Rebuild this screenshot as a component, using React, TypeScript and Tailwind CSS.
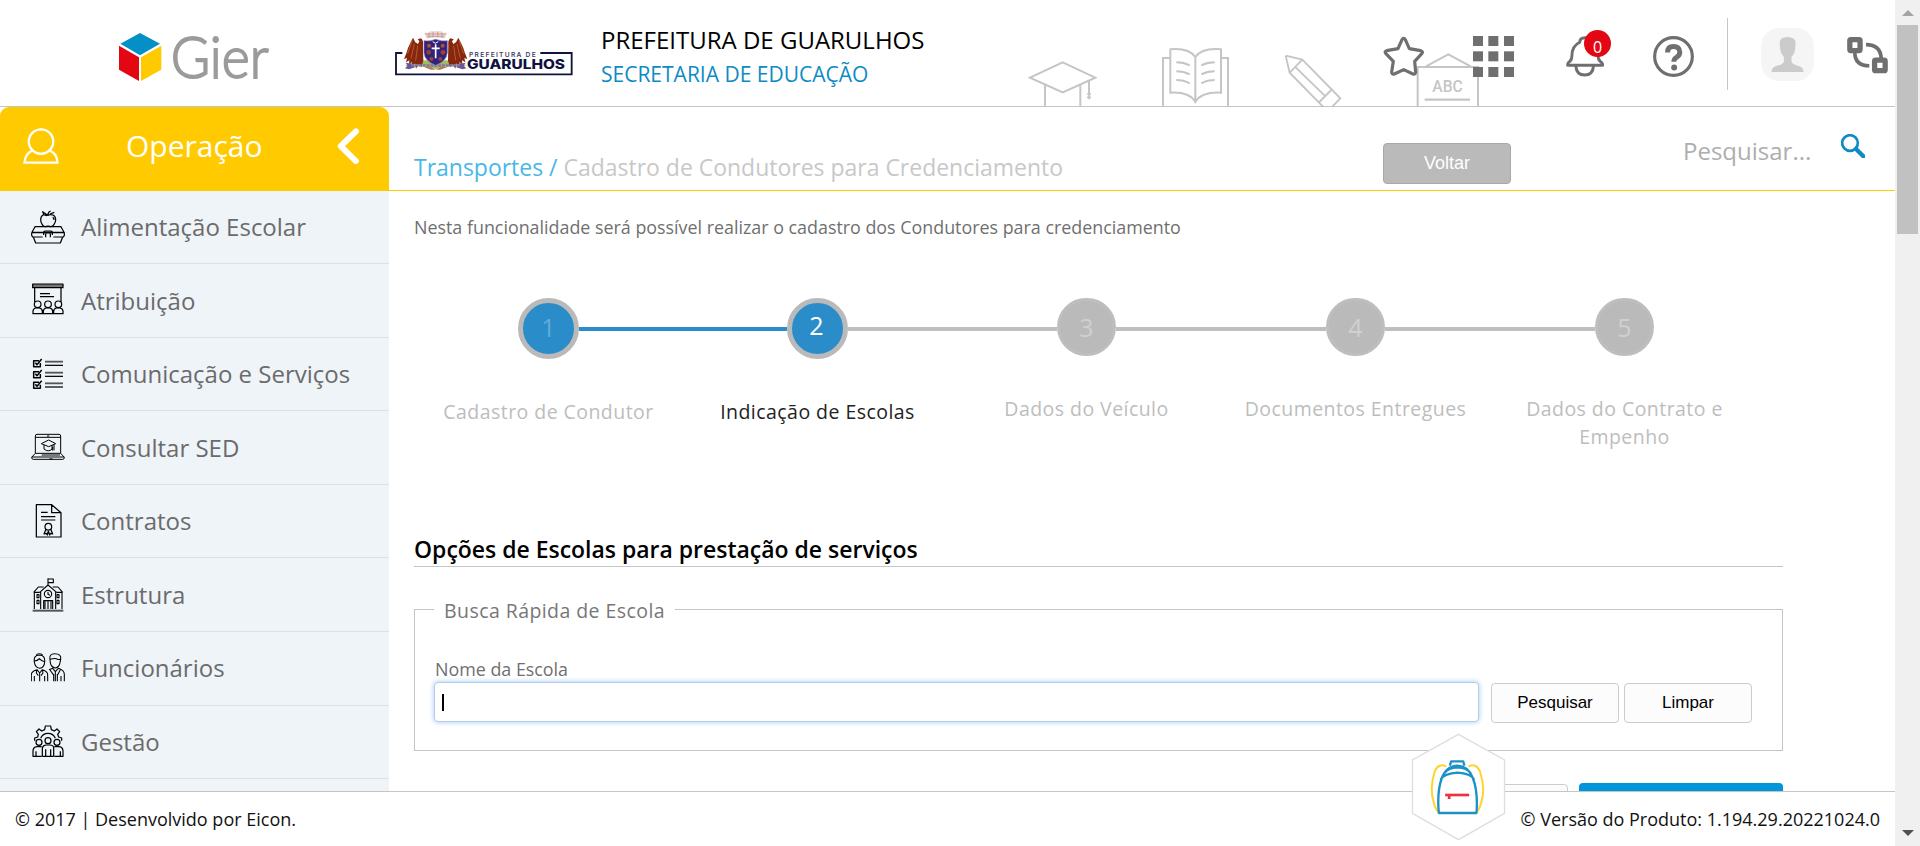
import type { ReactNode } from "react";

type IconProps = { box: string; children: ReactNode };

function MenuIcon({ box, children }: IconProps) {
  return (
    <svg viewBox={box} className="ml-[31px] size-[34px] shrink-0" fill="none" stroke="#000" strokeWidth="3.7" strokeLinejoin="round">
      {children}
    </svg>
  );
}

const menu: { label: string; icon: ReactNode }[] = [
  {
    label: "Alimentação Escolar",
    icon: (
      <MenuIcon box="93 630 102 102">
        <path d="M143 646c-8-5-21-2-21 13 0 10 7 21 13 21 3 0 5-2 9-2s6 2 9 2c6 0 14-11 14-21 0-15-14-18-24-13Zm0 0c1-6 5-12 9-13M142 645l-14-10 3 9 10 3M150 642l13-5M158 652c3 1 4 5 4 8" />
        <path d="M105 680h78l9 17H96ZM95 698h98v8l-3 5h-30M95 698v8l3 5h30M100 711l7 18h74l7-18M131 705v-8q0-4 4-4h18q4 0 4 4v8M137 712v-9q0-4 4-4h6q4 0 4 4v9M112 711h16M160 711h16" />
      </MenuIcon>
    ),
  },
  {
    label: "Atribuição",
    icon: (
      <MenuIcon box="93 71 102 102">
        <path d="M98 74h91v11H98Z" fill="#777" />
        <path d="M104 86v42M183 86v42M120 103h30M120 112h42" />
        <circle cx="113" cy="135" r="10" /><circle cx="144" cy="135" r="10" /><circle cx="175" cy="135" r="10" />
        <path d="M99 163v-7q0-8 8-10h11q9 2 9 10v7ZM130 163v-7q0-8 8-10h11q9 2 9 10v7ZM161 163v-7q0-8 8-10h11q9 2 9 10v7Z" />
      </MenuIcon>
    ),
  },
  {
    label: "Comunicação e Serviços",
    icon: (
      <MenuIcon box="93 292 102 102">
        {[0, 33, 65].map((y) => (
          <g key={y} transform={`translate(0 ${y})`}>
            <path d="M121 310v11h-20v-18h16" strokeWidth="4.5" />
            <path d="M106 309l5 6 14-17" strokeWidth="4.5" />
            <path d="M135 306h54" stroke="#555" strokeWidth="5.5" />
            <path d="M135 317h54" />
          </g>
        ))}
      </MenuIcon>
    ),
  },
  {
    label: "Consultar SED",
    icon: (
      <MenuIcon box="93 513 102 102">
        <path d="M106 580v-52q0-5 5-5h66q5 0 5 5v52M106 532h76M106 580h76l11 12q0 6-5 6h-88q-5 0-5-6ZM95 591h98M125 585h55M141 528h7M148 597h10" strokeWidth="3" />
        <path d="M124 551l22-11 21 11-21 9ZM132 555v12q13 11 24 0v-12M162 553v18M158 560v12" strokeWidth="3" />
      </MenuIcon>
    ),
  },
  {
    label: "Contratos",
    icon: (
      <MenuIcon box="93 734 102 102">
        <path d="M109 736h46l28 24v73h-74ZM155 736v24h28M123 759h20M123 772h43M123 782h43" />
        <circle cx="145" cy="802" r="10" />
        <path d="M138 810l-6 14 7-2 3 5 3-12 4 12 3-5 6 2-6-15" />
      </MenuIcon>
    ),
  },
  {
    label: "Estrutura",
    icon: (
      <MenuIcon box="93 113 102 102">
        <path d="M98 211h92" stroke="#555" strokeWidth="6" />
        <path d="M103 206v-50M186 206v-50M122 206v-53M167 206v-53M101 156l14-16h16M188 156l-14-16h-16M101 156h18M170 156h18M119 156l25-22 26 22M144 134v-20M145 116h15v11h-15M131 206v-25h27v25M144 206v-25M135 206v-24M153 206v-24" strokeWidth="3.3" />
        <circle cx="144" cy="161" r="11" strokeWidth="3.3" />
        <path d="M144 155v7l6 3M111 163h6v9h-6ZM171 163h6v9h-6ZM111 180h6v10h-6ZM171 180h6v10h-6Z" strokeWidth="3.3" />
      </MenuIcon>
    ),
  },
  {
    label: "Funcionários",
    icon: (
      <MenuIcon box="93 335 102 102">
        <path d="M110 348q-1-5 8-5t9 5M103 368q-3-21 15-20 18-1 16 20-1 17-15 19-14-2-16-19ZM103 365q10 0 15-7 8 9 16 9M94 426v-20q0-10 17-15l8 10 8-10q16 5 16 15v20M119 401v25M103 426v-16M134 426v-16M111 391l-2 10 6 8M127 391l2 10-6 8" strokeWidth="3.2" />
        <path d="M150 362q-4-19 14-19 21 0 18 17l-2 10q-2 14-14 16-13-2-15-16ZM150 360q14-4 19-2 8 4 12 2M147 391l11-4 8 10 9-10q18 6 18 18v21M166 397v29M161 426v-22M172 426v-22M183 426v-16M150 392l10 14M181 391l-8 15" strokeWidth="3.2" />
      </MenuIcon>
    ),
  },
  {
    label: "Gestão",
    icon: (
      <MenuIcon box="93 556 102 102">
        <path d="M104 603v-8l9-3 2-8-6-8 8-8 8 6 9-4 2-11h16l2 11 9 4 8-6 8 8-6 8 3 8 9 3v8M122 596q6-15 22-15t22 15" />
        <circle cx="117" cy="608" r="9" /><circle cx="144" cy="603" r="9" /><circle cx="171" cy="608" r="9" />
        <path d="M125 650h-26V635q0-13 12-14h14M163 650h26V635q0-13-12-14h-14M127 650v-25q2-9 12-9h10q12 0 12 9v25M137 650v-21M152 650v-21M108 650v-15M181 650v-15M127 650h34" />
      </MenuIcon>
    ),
  },
];

function Crest() {
  return (
    <svg viewBox="0 0 600 180" className="ml-[-10px] h-[60px] w-[200px] shrink-0">
      <path d="M52 84H33v64h527V84H466" fill="none" stroke="#10123f" strokeWidth="5.5" />
      <path d="M60 122q40-22 92-14 54-8 92 14l-18 4-28-2-46 8-46-8-28 2Z" fill="#a3bb60" />
      <path d="M114 62q2-16-6-22l-10 3 5 6-4 8-8-5-7-14-8 16-7 15-5 16-7 17 9-3-3 13 10-6-1 12 9-7v14l9-10 3 16 8-14 8 10 6-20Z" fill="#85280f" />
      <path d="M190 62q-2-16 6-22l10 3-5 6 4 8 8-5 7-14 8 16 7 15 5 16 7 17-9-3 3 13-10-6 1 12-9-7v14l-9-10-3 16-8-14-8 10-6-20Z" fill="#85280f" />
      <path d="M82 46l-14 40M88 56l-10 44M98 62l-6 44M222 46l14 40M216 56l10 44M206 62l6 44" stroke="#c2632f" strokeWidth="2.5" fill="none" />
      <path d="M62 113l22 4 6 10-18 6-12-3 8-8ZM242 113l-22 4-6 10 18 6 12-3-8-8Z" fill="#6a549c" />
      <path d="M78 120q76 3 148 0" fill="none" stroke="#8574ac" strokeWidth="7" strokeDasharray="9 2.5" />
      <path d="M118 127l14-3 20 10 20-10 14 3-20 7H138Z" fill="#b87a50" />
      <path d="M118 23h13l3-4h36l3 4h13l-7 18q-27-7-54 0Z" fill="#f0d6d0" />
      <path d="M120 27h64M126 34h52M132 23v16M144 20v17M158 20v17M171 23v16" stroke="#b0827d" strokeWidth="1.8" />
      <path d="M117 47q18 3 35-4 17 7 35 4v36q-2 25-35 38-33-13-35-38Z" fill="#33227a" stroke="#8b7cba" strokeWidth="2" />
      <circle cx="132" cy="62" r="6" fill="#a95731" /><circle cx="173" cy="62" r="6" fill="#a95731" />
      <circle cx="131" cy="82" r="7" fill="#8d4637" /><circle cx="174" cy="82" r="7" fill="#a9412a" />
      <circle cx="139" cy="102" r="6" fill="#8d4637" /><circle cx="166" cy="102" r="6" fill="#8d4637" />
      <path d="M152 58v42M140 70h24" stroke="#fff" strokeWidth="5" />
      <path d="M143 50q8 9 17 0" fill="none" stroke="#fff" strokeWidth="3" />
      <text x="252" y="95" fontFamily="Inter, sans-serif" fontSize="20" fontWeight="600" fill="#3d3f66" textLength="200" lengthAdjust="spacing">PREFEITURA DE</text>
      <text x="246" y="133" fontFamily="Inter, sans-serif" fontSize="40" fontWeight="800" fill="#10123f" textLength="294" lengthAdjust="spacingAndGlyphs">GUARULHOS</text>
    </svg>
  );
}

function Header() {
  return (
    <header className="relative flex h-[107px] shrink-0 items-start border-b border-[#c5c5c5] bg-white">
      <svg viewBox="0 0 1560 318" className="absolute top-0 left-[980px] h-[106px] w-[520px]" fill="none" stroke="#c5c5c5" strokeWidth="6">
        <path d="M150 233l98-46 98 46-98 44ZM195 256v64M301 256v64M327 242v40" />
        <path d="M327 278v20M321 282h12M321 292h12" strokeWidth="5" />
        <path d="M549 320V174h22M744 320V174h-21M571 278V148q55-5 75 23 20-28 77-23v130q-58-3-77 28-18-31-75-28ZM646 171v135M589 187q22 0 40 9M589 214q22 0 40 9M589 240q22 0 40 10M704 187q-22 0-40 9M704 214q-22 0-40 9M704 240q-22 0-40 10" />
        <path d="M917 167l50 12 114 116-24 25M917 167l12 51 104 106M967 179l-38 39M947 202l90 88M1054 270l-36 36" strokeWidth="5.5" />
        <path d="M1313 320V201h181v119M1338 199l67-36 67 36" />
        <path d="M1334 299h136" strokeWidth="7" />
        <text x="1357" y="277" fontFamily="Roboto, sans-serif" fontSize="52" fontWeight="500" fill="#c5c5c5" stroke="none" textLength="91" lengthAdjust="spacingAndGlyphs">ABC</text>
      </svg>

      <svg viewBox="354 45 456 240" className="mt-[15px] ml-[118px] h-[80px] w-[152px] shrink-0 overflow-visible">
        <path d="M420 99l60 32-60 35-59-35Z" fill="#048fc6" />
        <path d="M357 137l60 35v71l-60-34Z" fill="#e30613" />
        <path d="M484 137l-61 35v71l61-34Z" fill="#ffcb00" />
        <text x="512" y="234" fontFamily="Lato, sans-serif" fontSize="174" fontWeight="300" fill="#9b9b9b" stroke="#9b9b9b" strokeWidth="5.5" textLength="294" lengthAdjust="spacingAndGlyphs">Gier</text>
      </svg>

      <div className="mt-[25px] ml-[125px] flex w-[200px] shrink-0">
        <Crest />
      </div>

      <div className="mt-[23px] ml-[6px] w-[600px] leading-[34px]">
        <p className="text-[24px] text-black">PREFEITURA DE GUARULHOS</p>
        <p className="text-[21px] text-[#0d8bc5]">SECRETARIA DE EDUCAÇÃO</p>
      </div>

      <div className="relative ml-[182px] flex items-start">
        <svg viewBox="1208 108 126 120" className="mt-9 h-10 w-[42px] shrink-0" fill="none" stroke="#6f6f6f" strokeWidth="9.5" strokeLinejoin="round">
          <path d="M1270 115q3 0 5 4l12 27 34 6q8 3 4 8l-22 24 3 32q0 8-8 6l-28-13-28 13q-8 2-8-6l5-32-23-24q-4-6 3-8l34-6 12-27q2-4 5-4Z" />
        </svg>
        <svg viewBox="0 0 123 123" className="mt-9 ml-[48px] size-[41px] shrink-0" fill="#6f6f6f">
          {[0, 46, 93].map((y) => [0, 46, 93].map((x) => <rect key={`${x}-${y}`} x={x} y={y} width="30" height="30" />))}
        </svg>
        <div className="relative mt-9 ml-[52px] h-[41px] w-[38px] shrink-0">
          <svg viewBox="257 108 116 123" className="h-[41px] w-[38px]" fill="none" stroke="#6f6f6f" strokeWidth="9" strokeLinejoin="round">
            <path d="M262 196q0-8 7-12 6-5 6-16 0-31 24-42 0-14 16-14t16 14q24 12 24 42 0 11 6 16 8 5 8 12ZM287 198q2 28 27 28t27-28" />
          </svg>
          <span className="absolute -top-[6px] left-[18px] flex size-[27px] items-center justify-center rounded-full bg-[#e30613] pt-[7px] text-[16px] leading-none text-white">0</span>
        </div>
        <svg viewBox="518 107 124 124" className="mt-9 ml-[49px] size-[41px] shrink-0" fill="none" stroke="#6f6f6f">
          <circle cx="580" cy="169" r="57" strokeWidth="9.5" />
          <path d="M562 157q0-18 18-18t19 17q0 9-9 15-9 5-9 14" strokeWidth="15" />
          <circle cx="582" cy="202" r="9" fill="#6f6f6f" stroke="none" />
        </svg>
        <div className="mt-[18px] ml-[33px] h-[72px] w-px bg-[#c5c5c5]" />
        <svg viewBox="842 84 158 159" className="mt-7 ml-[33px] size-[53px] shrink-0">
          <rect x="842" y="84" width="158" height="159" rx="54" fill="#f5f5f5" />
          <path d="M898 135q-4-24 23-24t24 24q0 25-12 35v15q4 9 22 13 14 5 14 18h-96q0-13 14-18 19-4 23-13v-15q-12-10-12-35Z" fill="#cbcbcb" />
        </svg>
        <svg viewBox="1101 108 123 115" className="mt-9 ml-[33px] h-[38px] w-[41px] shrink-0" fill="none" stroke="#6f6f6f">
          <rect x="1109" y="119" width="31" height="33" rx="3" strokeWidth="16" />
          <rect x="1184" y="181" width="32" height="32" rx="3" strokeWidth="16" />
          <path d="M1158 134q44 0 46 42M1124 157q0 41 44 41" strokeWidth="11" />
        </svg>
      </div>
    </header>
  );
}

function Sidebar() {
  return (
    <aside className="flex w-[389px] shrink-0 flex-col overflow-hidden bg-white">
      <div className="flex h-[84px] shrink-0 items-start rounded-t-[9px] bg-[#ffcb00]">
        <svg viewBox="69 383 108 109" className="mt-[21px] ml-[23px] size-9 shrink-0" fill="none" stroke="#fff" strokeWidth="7">
          <circle cx="123" cy="424" r="37" />
          <path d="M97 451q-22 10-24 37h100q-1-27-24-37" />
        </svg>
        <h1 className="mt-[18px] ml-[67px] w-[137px] text-[30px] leading-[42px] text-white">Operação</h1>
        <svg viewBox="1011 383 66 109" className="mt-[21px] ml-[74px] h-9 w-[22px] shrink-0" fill="none" stroke="#fff" strokeWidth="18" strokeLinecap="round" strokeLinejoin="round">
          <path d="M1068 393l-46 45 46 45" />
        </svg>
      </div>
      <nav className="flex-1 overflow-hidden bg-[#eff4f9]">
        <div className="-mt-[0.4px]">
          {menu.map((m) => (
            <a key={m.label} className="flex h-[73.57px] items-center gap-4 border-b border-[#d8e1e9] text-[24px] text-[#6b6b6b]">
              {m.icon}
              <span className="pt-[0.4px]">{m.label}</span>
            </a>
          ))}
        </div>
      </nav>
    </aside>
  );
}

const steps = ["Cadastro de Condutor", "Indicação de Escolas", "Dados do Veículo", "Documentos Entregues", "Dados do Contrato e Empenho"];

function Steps() {
  return (
    <ol className="mt-[57px] flex h-[189px]">
      {steps.map((s, i) => {
        const on = i < 2;
        return (
          <li key={s} className="flex w-[269px] flex-col items-center">
            <div className="flex w-full items-start">
              <div className={`mt-[29px] h-1 flex-1 ${i === 0 ? "bg-transparent" : i === 1 ? "bg-[#2a8dc9]" : "bg-[#bfbfbf]"}`} />
              <div
                className={
                  on
                    ? "flex size-[61px] items-center justify-center rounded-full border-[5px] border-[#bababa] bg-[#2a8dc9]"
                    : "flex h-[58px] w-[59px] items-center justify-center rounded-full border-[3px] border-[#bebebe] bg-[#bababa]"
                }
              >
                <span className={`text-[25px] leading-none ${i === 0 ? "pb-[2px] text-[#63abd9]" : i === 1 ? "pr-[2px] pb-[7px] text-white" : "text-[#d0d0d0]"}`}>{i + 1}</span>
              </div>
              <div className={`mt-[29px] h-1 flex-1 ${i === 4 ? "bg-transparent" : i === 0 ? "bg-[#2a8dc9]" : "bg-[#bfbfbf]"}`} />
            </div>
            <p className={`mt-[39px] w-[230px] text-center text-[19.5px] leading-7 tracking-[0.45px] ${i === 1 ? "text-[#222]" : "text-[#bdbdbd]"}`}>{s}</p>
          </li>
        );
      })}
    </ol>
  );
}

function Content() {
  const button = "h-10 w-32 shrink-0 rounded-[4px] border border-[#ccc] bg-[#fcfcfc] font-['Liberation_Sans',sans-serif] text-[17px] text-black";
  return (
    <main className="flex min-w-0 flex-1 flex-col overflow-hidden bg-white">
      <div className="flex h-[84px] shrink-0 items-start border-b border-[#ffcb00] pl-[25px]">
        <h2 className="mt-[43px] w-[969px] text-[22.97px] leading-[34px] text-[#c8c8c8]">
          <span className="text-[#47b8e6]">Transportes / </span>Cadastro de Condutores para Credenciamento
        </h2>
        <button className="mt-9 h-[41px] w-32 rounded-[4px] border border-[#a9a9a9] bg-[#bababa] pb-px font-['Liberation_Sans',sans-serif] text-[18px] text-white">Voltar</button>
        <span className="mt-[27px] ml-[172px] w-[129px] text-[24px] leading-[34px] text-[#aeaeae]">Pesquisar...</span>
        <svg viewBox="1083 402 72 72" className="mt-[27px] ml-[29px] size-6 shrink-0" fill="none" stroke="#0d8bc5">
          <circle cx="1110" cy="429" r="23.5" strokeWidth="8" />
          <path d="M1128 447l22 22" strokeWidth="13" strokeLinecap="round" />
        </svg>
      </div>

      <div className="flex w-[1394px] flex-col pl-[25px]">
        <p className="mt-[22px] text-[17.87px] leading-7 text-[#6f6f6f]">Nesta funcionalidade será possível realizar o cadastro dos Condutores para credenciamento</p>
        <Steps />
        <h3 className="mt-[45px] border-b border-[#c5c5c5] text-[22.97px] leading-[34px] font-semibold text-black">Opções de Escolas para prestação de serviços</h3>

        <fieldset className="mt-7 h-[156px] border border-[#c5c5c5] px-[19px]">
          <legend className="h-7 px-[10px] text-[19.5px] leading-[31px] tracking-[0.43px] text-[#777]">Busca Rápida de Escola</legend>
          <label className="mt-8 block pl-px text-[17.87px] leading-7 text-[#6f6f6f]">Nome da Escola</label>
          <div className="-mt-px flex items-start">
            <div className="flex h-10 w-[1045px] items-center rounded-[4px] border border-[#b9cde0] bg-white pl-[7px] shadow-[0_0_4px_1px_#b5d8fa]">
              <div className="h-[17px] w-[2px] bg-black" />
            </div>
            <div className="mt-px ml-3 flex gap-[5px]">
              <button className={button}>Pesquisar</button>
              <button className={button}>Limpar</button>
            </div>
          </div>
        </fieldset>

        <div className="mt-8 flex items-start justify-end gap-[11px]">
          <div className="mt-px h-10 w-[128px] rounded-[4px] border border-[#ccc] bg-[#fcfcfc]" />
          <div className="h-10 w-[204px] rounded-[4px] bg-[#0096db]" />
        </div>
      </div>
    </main>
  );
}

function Backpack() {
  return (
    <svg viewBox="34 24 284 324" className="absolute top-[733px] left-[1411px] h-[108px] w-[95px]" fill="none">
      <path d="M176 28l138 77v160l-138 79L38 265V105Z" fill="#fff" stroke="#dedede" strokeWidth="4" />
      <path d="M139 125q-22-12-34 13-17 55-3 95 5 22 19 33M206 125q22-12 34 13 18 55 4 95-5 22-19 33" stroke="#ffd42e" strokeWidth="6" />
      <path d="M150 122l4-13h36l4 13M117 264q-6-64 9-105 14-36 47-37 32 1 46 37 16 41 11 105ZM122 164q12-19 51-21 40 2 50 21M133 145q12-17 40-18 28 1 40 18M117 264h113" stroke="#1a92c6" strokeWidth="7" strokeLinejoin="round" />
      <path d="M136 210h72" stroke="#f2303d" strokeWidth="8" />
      <path d="M148 211v11" stroke="#f2303d" strokeWidth="8" />
    </svg>
  );
}

function Scrollbar() {
  return (
    <div className="flex w-[25px] shrink-0 flex-col items-center bg-[#f0f0f0]">
      <svg viewBox="0 0 12 6" className="mt-[10px] h-[6px] w-3" fill="#a3a3a3"><path d="M6 0l6 6H0Z" /></svg>
      <div className="mt-[9px] h-[209px] w-[21px] bg-[#c1c1c1]" />
      <svg viewBox="0 0 12 6" className="mt-auto mb-[10px] h-[6px] w-3" fill="#505050"><path d="M0 0h12L6 6Z" /></svg>
    </div>
  );
}

export default function App() {
  return (
    <div className="relative flex h-[846px] w-[1920px] overflow-hidden bg-white font-['Open_Sans',sans-serif]">
      <div className="flex w-[1895px] flex-col">
        <Header />
        <div className="flex min-h-0 flex-1">
          <Sidebar />
          <Content />
        </div>
        <footer className="flex h-[55px] shrink-0 items-center justify-between border-t border-[#c5c5c5] bg-white px-[15px] text-[18px] text-[#111]">
          <span>© 2017 | Desenvolvido por Eicon.</span>
          <span>© Versão do Produto: 1.194.29.20221024.0</span>
        </footer>
      </div>
      <Scrollbar />
      <Backpack />
    </div>
  );
}
